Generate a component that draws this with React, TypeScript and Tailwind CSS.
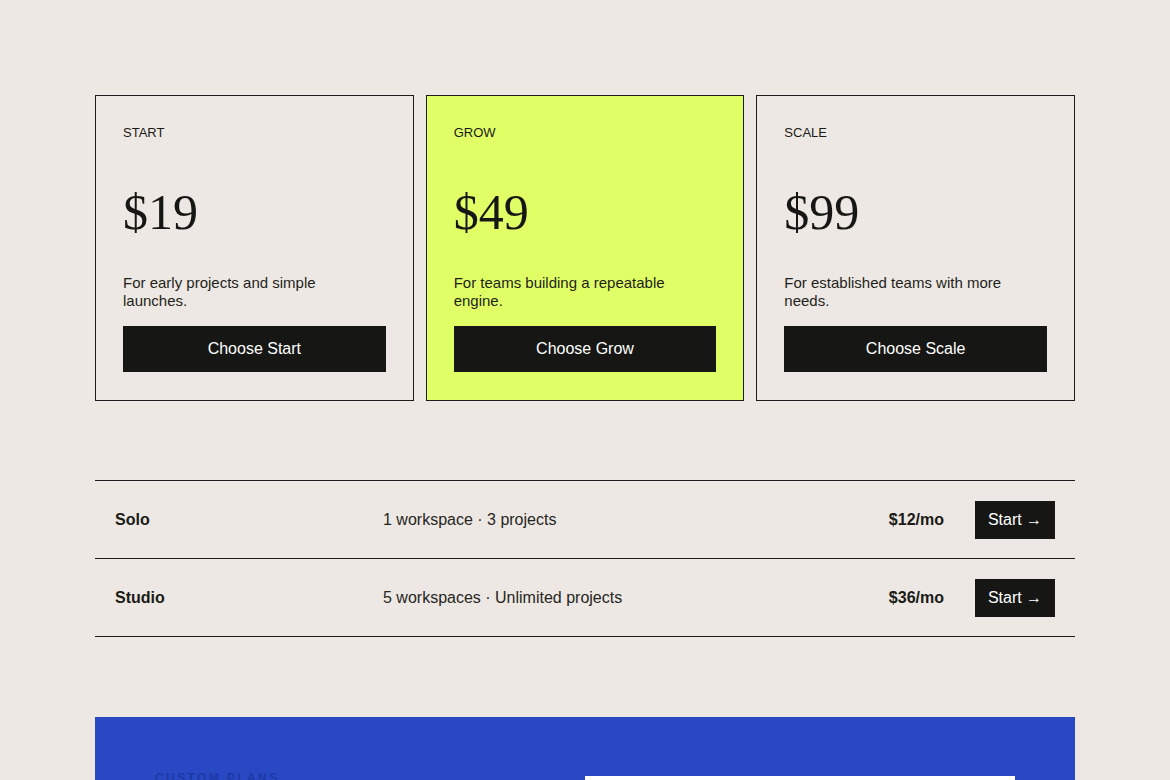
const plans = [
  { name: "START", price: "$19", blurb: "For early projects and simple launches.", cta: "Choose Start", featured: false },
  { name: "GROW", price: "$49", blurb: "For teams building a repeatable engine.", cta: "Choose Grow", featured: true },
  { name: "SCALE", price: "$99", blurb: "For established teams with more needs.", cta: "Choose Scale", featured: false },
];

const rows = [
  { name: "Solo", detail: "1 workspace · 3 projects", price: "$12/mo" },
  { name: "Studio", detail: "5 workspaces · Unlimited projects", price: "$36/mo" },
];

function PlanCard({ plan }: { plan: (typeof plans)[number] }) {
  return (
    <article
      className={`flex flex-col border border-[#1c1c1a] px-[27px] pt-7 pb-7 ${
        plan.featured ? "bg-[#e0fe66]" : "bg-[#ede8e3]"
      }`}
    >
      <p className="text-[13px] leading-[18px] text-[#1a1a17]">{plan.name}</p>
      <p className="mt-11 font-['Liberation_Serif',serif] text-[50px] leading-[52px] text-[#161614]">
        {plan.price}
      </p>
      <p className="mt-9 pr-8 text-[15px] leading-[18px] text-[#1f1f1c]">{plan.blurb}</p>
      <button className="mt-4 h-[46px] w-full bg-[#161614] text-[16px] text-white">{plan.cta}</button>
    </article>
  );
}

export default function App() {
  return (
    <div className="min-h-screen bg-[#ede8e3] font-['Liberation_Sans',Arial,sans-serif] text-[#1a1a17]">
      <div className="mx-auto w-[980px] pt-[95px]">
        <section className="grid grid-cols-3 gap-3">
          {plans.map((plan) => (
            <PlanCard key={plan.name} plan={plan} />
          ))}
        </section>

        <section className="mt-[79px] border-t border-[#1c1c1a]">
          {rows.map((row) => (
            <div key={row.name} className="flex h-[78px] items-center border-b border-[#1c1c1a] px-5">
              <p className="w-[268px] text-[16px] font-bold">{row.name}</p>
              <p className="flex-1 text-[16px] text-[#262623]">{row.detail}</p>
              <p className="text-[16px] font-bold">{row.price}</p>
              <button className="ml-[31px] flex h-[38px] w-[80px] items-center justify-center bg-[#161614] text-[16px] text-white">
                Start →
              </button>
            </div>
          ))}
        </section>

        <section className="mt-[80px] grid grid-cols-2 bg-[#2848c4] px-[60px] pt-[52px] pb-16">
          <div>
            <p className="text-[12px] font-bold uppercase tracking-[0.2em] text-[#1f3aa6]">Custom plans</p>
          </div>
          <div className="mt-[7px] h-[120px] bg-white" />
        </section>
      </div>
    </div>
  );
}
